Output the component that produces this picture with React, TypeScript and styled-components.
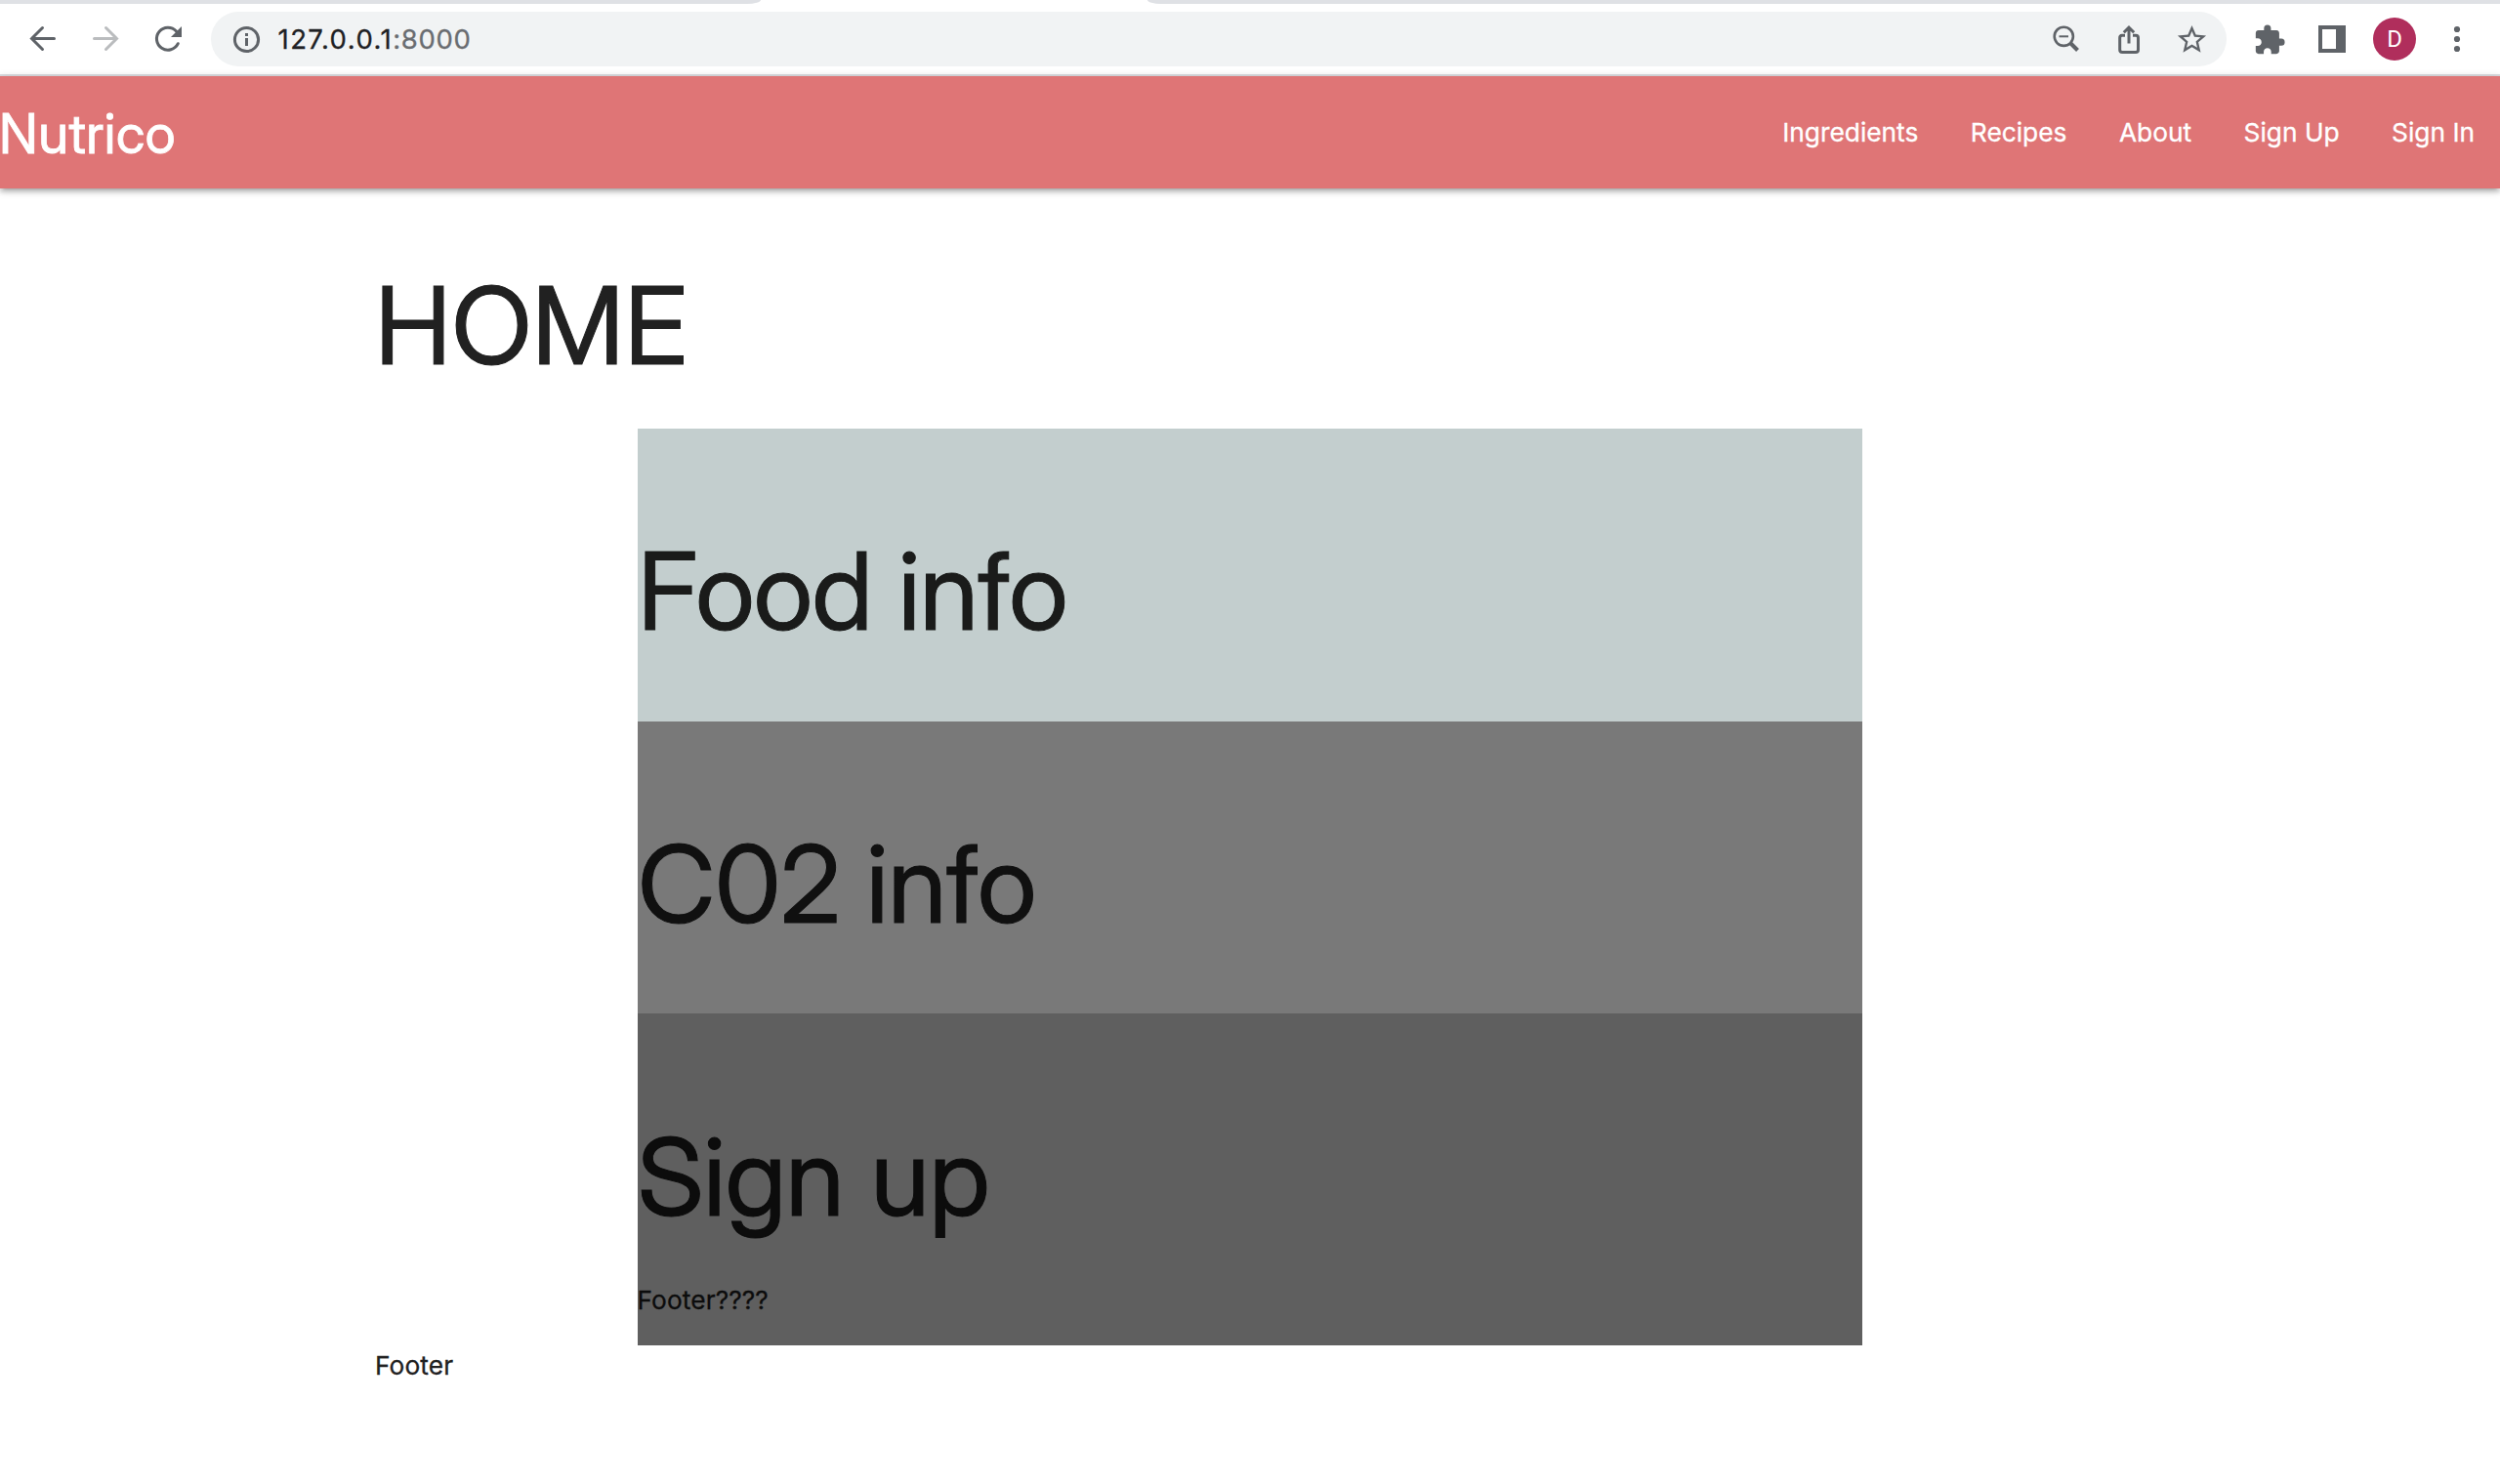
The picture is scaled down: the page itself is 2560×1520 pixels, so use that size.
import React from 'react';
import styled, { createGlobalStyle } from 'styled-components';
import { MdStarBorder, MdExtension } from 'react-icons/md';

const display = '"Inter Display", Inter, "Liberation Sans", sans-serif';

const GlobalStyle = createGlobalStyle`
  * { box-sizing: border-box; }
  body { margin: 0; background: #fff; color: #212121; font-family: Inter, "Liberation Sans", sans-serif; }
  h1, p { margin: 0; font-weight: 400; }
`;

const TabStrip = styled.div`
  display: flex;
  justify-content: space-between;
  height: 4px;
  background: #fff;
`;
const InactiveTabs = styled.div<{ $side: 'left' | 'right' }>`
  width: ${p => (p.$side === 'left' ? 779 : 1385)}px;
  background: #dfe1e5;
  border-radius: ${p => (p.$side === 'left' ? '0 0 14px 0 / 0 0 4px 0' : '0 0 0 14px / 0 0 0 4px')};
`;
const Toolbar = styled.div`
  display: flex;
  align-items: center;
  gap: 24px;
  height: 74px;
  padding: 0 24px;
  border-bottom: 2px solid #dadce0;
`;
const Icon = styled.svg<{ $muted?: boolean }>`
  flex: none;
  width: 40px;
  height: 40px;
  fill: none;
  stroke: ${p => (p.$muted ? '#babcbe' : '#5f6368')};
  stroke-width: 3;
`;
const IconSlot = styled.span<{ $size: number }>`
  display: flex;
  align-items: center;
  justify-content: center;
  flex: none;
  width: 40px;
  height: 40px;
  padding-top: 1px;
  color: #5f6368;
  svg { width: ${p => p.$size}px; height: ${p => p.$size}px; flex: none; }
`;
const AddressBar = styled.div`
  display: flex;
  align-items: center;
  gap: 24px;
  flex: 1;
  height: 56px;
  padding: 0 16px;
  border-radius: 28px;
  background: #f1f3f4;
`;
const Url = styled.div`
  flex: 1;
  margin-left: -11.5px;
  font-size: 27.5px;
  line-height: 40px;
  color: #202124;
  letter-spacing: 1.45px;
  -webkit-text-stroke: 0.3px;
`;
const Port = styled.span`
  color: #6a6d71;
  letter-spacing: 0.7px;
`;
const Avatar = styled.div`
  display: flex;
  align-items: center;
  justify-content: center;
  flex: none;
  width: 44px;
  height: 44px;
  margin: 0 -2px;
  border-radius: 50%;
  background: #b02e5c;
  color: #fff;
  font: 400 24px Roboto, sans-serif;
`;

const Header = styled.header`
  display: flex;
  align-items: center;
  justify-content: space-between;
  height: 115px;
  padding-right: 26px;
  background: #df7576;
  color: #fff;
  box-shadow: 0 4px 4px rgba(0, 0, 0, 0.14), 0 5px 2px -4px rgba(0, 0, 0, 0.12), 0 2px 9px rgba(0, 0, 0, 0.2);
`;
const Brand = styled.div`
  margin-left: -1px;
  padding-top: 2px;
  font-family: ${display};
  font-size: 56px;
  line-height: 68px;
  letter-spacing: 0.5px;
  -webkit-text-stroke: 0.8px;
`;
const Nav = styled.nav`
  display: flex;
  gap: 53.5px;
`;
const NavLink = styled.a`
  font-size: 26.3px;
  line-height: 40px;
  -webkit-text-stroke: 0.3px;
`;

const Page = styled.main`
  width: 70%;
  margin: 0 auto;
  padding-top: 77.5px;
`;
const Heading = styled.h1<{ $track?: number }>`
  font-family: ${display};
  font-size: 110px;
  line-height: 124px;
  letter-spacing: ${p => p.$track ?? 0.3}px;
  -webkit-text-stroke: 1px;
`;
const Title = styled(Heading)`
  margin-bottom: 44.5px;
`;
const Stack = styled.div`
  width: 1254px;
  margin: 0 auto;
`;
const Panel = styled.section<{ $bg: string; $ink: string; $height: number; $top: number }>`
  height: ${p => p.$height}px;
  padding-top: ${p => p.$top}px;
  background: ${p => p.$bg};
  color: ${p => p.$ink};
`;
const Note = styled.p<{ $top?: number; $left?: number }>`
  margin-top: ${p => p.$top ?? 0}px;
  margin-left: ${p => p.$left ?? 0}px;
  font-size: 26.3px;
  line-height: 40px;
  letter-spacing: 0.1px;
  -webkit-text-stroke: 0.3px;
`;

export default function App() {
  return (
    <>
      <GlobalStyle />
      <TabStrip>
        <InactiveTabs $side="left" />
        <InactiveTabs $side="right" />
      </TabStrip>
      <Toolbar>
        <Icon viewBox="0 0 40 40" strokeLinecap="round">
          <path d="M31.500 19.500H8.500M19.500 8.500L8.500 19.500L19.500 30.500" />
        </Icon>
        <Icon viewBox="0 0 40 40" strokeLinecap="round" $muted>
          <path d="M8.500 19.500H31.500M20.500 8.500L31.500 19.500L20.500 30.500" />
        </Icon>
        <Icon viewBox="0 0 40 40" strokeLinecap="round">
          <path d="M30.300 24.700A11.500 11.500 0 1 1 28.500 12" />
          <path d="M34 7V18H23Z" fill="#5f6368" stroke="none" />
        </Icon>
        <AddressBar>
          <Icon viewBox="0 0 40 40">
            <circle cx="20.500" cy="20.500" r="12.100" />
            <path d="M20.500 14V17M20.500 19V27" />
          </Icon>
          <Url>127.0.0.1<Port>:8000</Port></Url>
          <Icon viewBox="0 0 40 40">
            <circle cx="17.300" cy="17.300" r="9.600" strokeWidth="2.600" />
            <path d="M12.500 17.300H22" strokeWidth="2" />
            <path d="M24.500 24.500L31.500 31.500" strokeWidth="4" />
          </Icon>
          <Icon viewBox="0 0 40 40" strokeWidth="2.600">
            <path d="M16 16.300H13A2.500 2.500 0 0 0 10.700 18.800V31A2.500 2.500 0 0 0 13.200 33.500H27A2.500 2.500 0 0 0 29.500 31V18.800A2.500 2.500 0 0 0 27 16.300H24M20 24.500V8.500M14.800 13.300L20 8.200L25.200 13.300" />
          </Icon>
          <IconSlot $size={35}><MdStarBorder /></IconSlot>
        </AddressBar>
        <IconSlot $size={34}><MdExtension /></IconSlot>
        <Icon viewBox="0 0 40 40">
          <path d="M6 6H34V34H6ZM10 10V30H24V10Z" fill="#5f6368" fillRule="evenodd" stroke="none" />
        </Icon>
        <Avatar>D</Avatar>
        <Icon viewBox="0 0 40 40">
          <g fill="#5f6368" stroke="none">
            <circle cx="20" cy="10" r="3.100" />
            <circle cx="20" cy="20" r="3.100" />
            <circle cx="20" cy="30" r="3.100" />
          </g>
        </Icon>
      </Toolbar>
      <Header>
        <Brand>Nutrico</Brand>
        <Nav>
          <NavLink>Ingredients</NavLink>
          <NavLink>Recipes</NavLink>
          <NavLink>About</NavLink>
          <NavLink>Sign Up</NavLink>
          <NavLink>Sign In</NavLink>
        </Nav>
      </Header>
      <Page>
        <Title>HOME</Title>
        <Stack>
          <Panel $bg="#c3cece" $ink="#1a1b1a" $height={300} $top={103.5}>
            <Heading $track={-0.7}>Food info</Heading>
          </Panel>
          <Panel $bg="#797979" $ink="#101010" $height={299} $top={103.5}>
            <Heading $track={-0.5}>C02 info</Heading>
          </Panel>
          <Panel $bg="#5f5f5f" $ink="#0c0c0c" $height={340} $top={104.5}>
            <Heading $track={-0.3}>Sign up</Heading>
            <Note $top={45} $left={-0.5}>Footer????</Note>
          </Panel>
        </Stack>
        <Note $top={1}>Footer</Note>
      </Page>
    </>
  );
}
